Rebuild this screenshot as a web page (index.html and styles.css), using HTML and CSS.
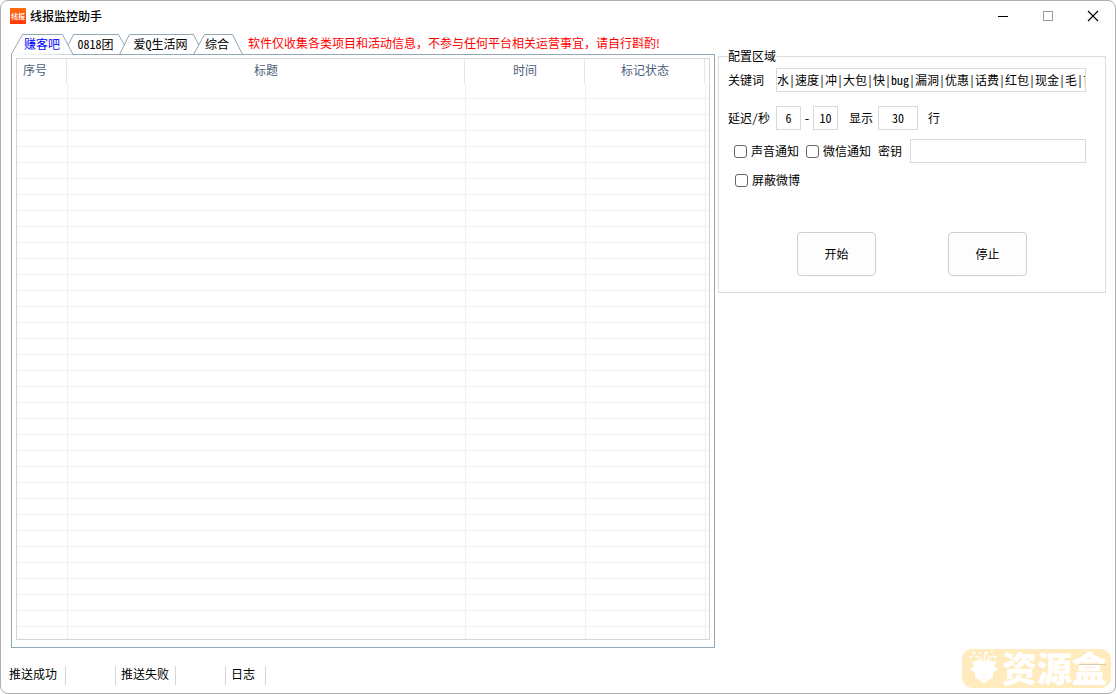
FILE: index.html
```html
<!DOCTYPE html>
<html lang="zh-CN">
<head>
<meta charset="utf-8">
<title>线报监控助手</title>
<link rel="stylesheet" href="styles.css">
</head>
<body>
<div class="window">
  <header class="titlebar">
    <svg class="logo" viewBox="0 0 16 16" aria-hidden="true">
      <defs><linearGradient id="lg" x1="0" y1="0" x2="0" y2="1"><stop offset="0" stop-color="#ff6d14"/><stop offset="1" stop-color="#ff3a08"/></linearGradient></defs>
      <rect width="16" height="16" fill="url(#lg)"/>
      <text class="logo-text" x="8" y="11" text-anchor="middle">线报</text>
    </svg>
    <h1 class="title">线报监控助手</h1>
    <div class="controls">
      <button class="control" type="button" aria-label="最小化"><svg viewBox="0 0 12 12"><path d="M1 6.5h10" stroke="#000"/></svg></button>
      <button class="control" type="button" aria-label="最大化"><svg viewBox="0 0 12 12"><rect x="1.5" y="1.5" width="9" height="9" fill="none" stroke="#999"/></svg></button>
      <button class="control" type="button" aria-label="关闭"><svg viewBox="0 0 12 12"><path d="M1 1l10 10M11 1L1 11" stroke="#000" stroke-width="1.2"/></svg></button>
    </div>
  </header>

  <main class="main">
    <section class="feed">
      <div class="tabs">
        <button class="tab tab-active" type="button"><svg class="tab-shape" width="63" height="21"><path d="M.5 21v-1L11.5.5h40L62 20.5" /></svg><span class="tab-text">赚客吧</span></button>
        <button class="tab tab-second" type="button"><svg class="tab-shape" width="67" height="20"><path d="M.5 20.5L10.5.5h45l11 20" /></svg><span class="tab-text">0818团</span></button>
        <button class="tab tab-third" type="button"><svg class="tab-shape" width="85" height="20"><path d="M.5 20.5L10.5.5h64l10 20" /></svg><span class="tab-text">爱Q生活网</span></button>
        <button class="tab tab-fourth" type="button"><svg class="tab-shape" width="50" height="20"><path d="M.5 20.5L11.5.5h28l10 20" /></svg><span class="tab-text">综合</span></button>
        <p class="notice">软件仅收集各类项目和活动信息，不参与任何平台相关运营事宜，请自行斟酌!</p>
      </div>
      <div class="panel">
        <div class="list">
          <table class="table">
            <colgroup><col class="col-no"><col><col class="col-side"><col class="col-side"><col class="col-end"></colgroup>
            <thead>
              <tr><th class="first"><span>序号</span></th><th><span>标题</span></th><th><span>时间</span></th><th><span>标记状态</span></th><th class="end"></th></tr>
            </thead>
            <tbody id="rows"></tbody>
          </table>
        </div>
      </div>
    </section>

    <fieldset class="config">
      <legend>配置区域</legend>
      <div class="row">
        <label class="label" for="kw">关键词</label>
        <input class="field grow" id="kw" type="text" value="水|速度|冲|大包|快|bug|漏洞|优惠|话费|红包|现金|毛|首">
      </div>
      <div class="row row-delay">
        <label class="label" for="min">延迟/秒</label>
        <input class="field num" id="min" type="text" value="6">
        <label class="dash" for="max">-</label>
        <input class="field num" id="max" type="text" value="10">
        <label class="show" for="count">显示</label>
        <input class="field count" id="count" type="text" value="30">
        <span class="unit">行</span>
      </div>
      <div class="row row-notify">
        <label class="check"><input type="checkbox">声音通知</label>
        <label class="check"><input type="checkbox">微信通知</label>
        <label class="key" for="key">密钥</label>
        <input class="field grow" id="key" type="text">
      </div>
      <div class="row row-block">
        <label class="check"><input type="checkbox">屏蔽微博</label>
      </div>
      <div class="actions">
        <button class="action" type="button">开始</button>
        <button class="action" type="button">停止</button>
      </div>
    </fieldset>
  </main>

  <footer class="status">
    <span class="cell cell-first">推送成功</span>
    <span class="cell cell-value"></span>
    <span class="cell cell-label">推送失败</span>
    <span class="cell cell-value"></span>
    <span class="cell cell-log">日志</span>
  </footer>

  <div class="watermark">
    <svg class="box" viewBox="0 0 34 36" aria-hidden="true">
      <g fill="#fff">
        <path d="M7 18l9 4 9-4v10l-9 6-9-6z"/>
        <path d="M7 15l9 6-4 5-10-5zM25 15l-9 6 4 5 10-5z"/>
        <path d="M7 17L3 13l9-2 4 2 4-2 9 2-4 4-9 5z"/>
      </g>
      <path d="M16 22v11" stroke="#ffebbe" stroke-width=".5"/>
      <g fill="none" stroke="#fff" stroke-width="1.5"><path d="M14 14Q12 7 7 7M16 14Q16 8 18 5M18 14q2-6 7-7"/></g>
      <g fill="#fff"><circle cx="6" cy="4" r="1.5"/><circle cx="18" cy="4" r="1.7"/><circle cx="27" cy="8" r="1.5"/><circle cx="12" cy="4" r="1"/><circle cx="3" cy="8" r="1.2"/><circle cx="24" cy="3" r="1"/></g>
    </svg>
    <span>资源盒</span>
  </div>
</div>
<script src="rows.js"></script>
</body>
</html>
```

FILE: styles.css
```css
* { box-sizing: border-box; }

body {
  margin: 0;
  background: #fff;
  color: #000;
  font: 12px/16px "Noto Sans CJK SC", sans-serif;
  font-feature-settings: "hwid";
}

button, input {
  margin: 0;
  padding: 0;
  font: inherit;
  font-feature-settings: inherit;
  color: inherit;
}

.window {
  position: relative;
  display: flex;
  flex-direction: column;
  height: 100vh;
  border: 1px solid #b0b0b0;
  border-radius: 8px;
  overflow: hidden;
}

.titlebar {
  display: flex;
  align-items: center;
  height: 30px;
  padding-left: 9px;
}

.logo { width: 16px; height: 16px; }
.logo-text { font-size: 7px; font-weight: 500; fill: #fff; }
.title { margin: 0 0 0 4px; font-size: 12px; line-height: 16px; font-weight: 500; }
.controls { display: flex; margin-left: auto; }
.control {
  display: flex;
  align-items: center;
  justify-content: center;
  width: 45px;
  height: 28px;
  border: 0;
  background: none;
}
.control svg { width: 12px; height: 12px; }

.main {
  flex: 1;
  min-height: 0;
  display: grid;
  grid-template-columns: minmax(0, 704fr) minmax(0, 388fr);
  gap: 3px;
  padding: 3px 9px 0 10px;
}

.feed { display: flex; flex-direction: column; min-height: 0; }
.tabs { display: flex; height: 20px; }
.tab {
  position: relative;
  height: 20px;
  border: 0;
  background: none;
}
.tab + .tab { margin-left: -11px; padding-right: 2px; }
.tab-shape { position: absolute; left: 0; top: 0; fill: #fff; stroke: #91a7b4; }
.tab-text { position: relative; }
.tab-active { z-index: 3; width: 63px; padding-right: 1px; color: #00f; }
.tab-second { width: 67px; }
.tab-third { z-index: 1; width: 85px; }
.tab-fourth { z-index: 2; width: 50px; }
.notice {
  margin: 0 0 0 5px;
  color: #f00;
  line-height: 18px;
  font-feature-settings: normal;
  white-space: nowrap;
}

.panel {
  flex: 1;
  min-height: 0;
  display: flex;
  padding: 3px 4px 7px;
  border: 1px solid #91a7b4;
}
.list { flex: 1; overflow: hidden; border: 1px solid #d5d5d5; }
.table { width: 100%; table-layout: fixed; border-collapse: separate; border-spacing: 0; }
.col-no { width: 51px; }
.col-side { width: 120px; }
.col-end { width: 3px; }
.table th { height: 24px; padding: 0 1px 0 0; font-weight: 400; color: #4c607a; }
.table th span { display: block; height: 24px; line-height: 22px; border-right: 1px solid #e5e5e5; }
.table .first { text-align: left; }
.table .first span { padding-left: 6px; }
.table td {
  height: 16px;
  padding: 0;
  border-right: 1px solid #f0f0f0;
  border-bottom: 1px solid #f0f0f0;
}
.table td:last-child { border-right: 0; }

.config {
  align-self: start;
  min-width: 0;
  margin: 14px 0 0;
  padding: 4px 19px 16px 9px;
  border: 1px solid #dcdcdc;
}
.config legend { padding: 0; }
.row { display: flex; align-items: center; }
.label { width: 48px; }
.field { height: 24px; min-width: 0; padding: 0 0 1px; border: 1px solid #d9d9d9; border-radius: 0; background: #fff; }
.grow { flex: 1; }
.num { width: 25px; text-align: center; }
.count { width: 40px; text-align: center; }
.dash { width: 12px; text-align: center; }
.show { padding: 0 5px 0 11px; }
.unit { padding-left: 10px; }
.row-delay { margin-top: 14px; }
.row-notify { margin-top: 9px; padding-left: 6px; }
.row-block { margin-top: 9px; padding-left: 7px; }
.check { display: flex; align-items: center; gap: 4px; margin-right: 7px; }
.check input {
  appearance: none;
  width: 13px;
  height: 13px;
  border: 1px solid #666;
  border-radius: 3px;
  background: #fff;
}
.key { padding-right: 8px; }
.actions { display: flex; justify-content: center; gap: 72px; margin-top: 44px; padding-left: 10px; }
.action {
  width: 79px;
  height: 44px;
  border: 1px solid #d0d0d0;
  border-radius: 4px;
  background: #fdfdfd;
}

.status { display: flex; padding: 18px 0 8px; }
.cell { height: 19px; line-height: 16px; border-right: 1px solid #d7d7d7; white-space: nowrap; }
.cell-first { width: 65px; padding-left: 8px; }
.cell-value { width: 50px; }
.cell-label { width: 60px; padding-left: 5px; }
.cell-log { width: 40px; padding-left: 5px; }

.watermark {
  position: absolute;
  right: 4px;
  bottom: 5px;
  display: flex;
  width: 149px;
  height: 39px;
  padding: 0 0 0 6px;
  border-radius: 10px;
  background: #ffebbe;
  color: #fff;
  font-size: 35px;
  line-height: 36px;
  font-weight: 900;
  white-space: nowrap;
}
.watermark::after {
  content: "";
  position: absolute;
  right: 5px;
  top: 15px;
  width: 27px;
  height: 1px;
  background: #d8cdb0;
}
.box { flex: none; width: 34px; height: 36px; }
```

FILE: rows.js
```js
const rows = document.getElementById("rows");
for (let i = 0; i < 35; i += 1) {
  const row = rows.insertRow();
  for (let j = 0; j < 5; j += 1) row.insertCell();
}
```
